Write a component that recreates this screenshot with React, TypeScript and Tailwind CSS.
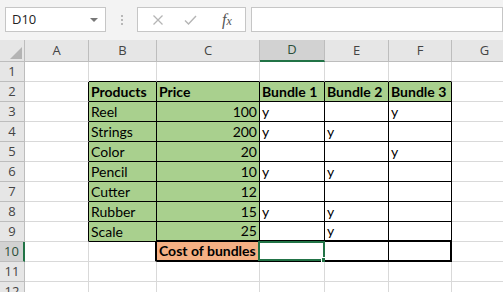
import React from 'react';

const colNames = ['A', 'B', 'C', 'D', 'E', 'F', 'G'];
const colWidths = ['w-[64px]', 'w-[68px]', 'w-[103px]', 'w-[65px]', 'w-[64px]', 'w-[63px]', 'w-[66px]'];

type Cell = { text?: string; bold?: boolean; right?: boolean };

const sheet: Record<string, Cell> = {
  B2: { text: 'Products', bold: true },
  C2: { text: 'Price', bold: true },
  D2: { text: 'Bundle 1', bold: true },
  E2: { text: 'Bundle 2', bold: true },
  F2: { text: 'Bundle 3', bold: true },
  B3: { text: 'Reel' }, C3: { text: '100', right: true }, D3: { text: 'y' }, F3: { text: 'y' },
  B4: { text: 'Strings' }, C4: { text: '200', right: true }, D4: { text: 'y' }, E4: { text: 'y' },
  B5: { text: 'Color' }, C5: { text: '20', right: true }, F5: { text: 'y' },
  B6: { text: 'Pencil' }, C6: { text: '10', right: true }, D6: { text: 'y' }, E6: { text: 'y' },
  B7: { text: 'Cutter' }, C7: { text: '12', right: true },
  B8: { text: 'Rubber' }, C8: { text: '15', right: true }, D8: { text: 'y' }, E8: { text: 'y' },
  B9: { text: 'Scale' }, C9: { text: '25', right: true }, E9: { text: 'y' },
  C10: { text: 'Cost of bundles', bold: true },
};

const inTable = (r: number, c: number) =>
  (r >= 2 && r <= 9 && c >= 1 && c <= 5) || (r === 10 && c >= 2 && c <= 5);

const isGreen = (r: number, c: number) =>
  (r === 2 && c >= 1 && c <= 5) || (r >= 3 && r <= 9 && (c === 1 || c === 2));

function SheetCell({ r, c }: { r: number; c: number }) {
  const key = colNames[c] + r;
  const cell = sheet[key];
  const thickRight = r === 10 && (c === 1 || c === 2 || c === 5);
  const thickBottom = (r === 9 || r === 10) && c >= 2 && c <= 5;
  const blackRight = inTable(r, c) || inTable(r, c + 1);
  const blackBottom = inTable(r, c) || inTable(r + 1, c);

  let bg = 'bg-white';
  if (isGreen(r, c)) bg = 'bg-[#a9d08e]';
  if (key === 'C10') bg = 'bg-[#f4b084]';

  return (
    <div
      className={[
        'relative flex h-full shrink-0 items-end overflow-visible text-[14px] leading-none text-black',
        colWidths[c],
        bg,
        thickRight ? 'border-r-2 border-r-black' : blackRight ? 'border-r border-r-black' : 'border-r border-r-[#d9d9d9]',
        thickBottom ? 'border-b-2 border-b-black' : blackBottom ? 'border-b border-b-black' : 'border-b border-b-[#d9d9d9]',
        cell?.right ? 'justify-end pr-[2px]' : 'pl-[2px]',
        cell?.bold ? 'font-bold' : '',
      ].join(' ')}
    >
      {cell?.text && <span className="whitespace-nowrap pb-[2px]">{cell.text}</span>}
      {key === 'D10' && (
        <div className="absolute -left-[2px] -top-[1px] -right-[1px] -bottom-[1px] border-2 border-[#217346]">
          <div className="absolute -right-[4px] -bottom-[4px] h-[6px] w-[6px] border border-white bg-[#217346]" />
        </div>
      )}
    </div>
  );
}

export default function App() {
  const rows = Array.from({ length: 12 }, (_, i) => i + 1);

  return (
    <div className="h-[292px] w-[503px] overflow-hidden bg-white font-['Lato',sans-serif]">
      {/* formula bar */}
      <div className="flex h-[40px] items-start bg-[#f3f3f3] pt-[7px] pl-[5px]">
        <div className="flex h-[25px] w-[101px] items-center justify-between border border-[#c6c6c6] bg-white pl-[6px] pr-[7px] font-['Open_Sans',sans-serif] text-[13px] text-[#222]">
          <span>D10</span>
          <span className="h-0 w-0 border-x-[4px] border-t-[4px] border-x-transparent border-t-[#777]" />
        </div>
        <div className="flex h-[25px] w-[31px] flex-col items-center justify-center gap-[2px]">
          <span className="h-[2px] w-[2px] bg-[#b8b8b8]" />
          <span className="h-[2px] w-[2px] bg-[#b8b8b8]" />
          <span className="h-[2px] w-[2px] bg-[#b8b8b8]" />
        </div>
        <div className="flex h-[25px] w-[109px] items-center border border-[#c6c6c6] bg-white">
          <svg className="ml-[14px]" width="12" height="12" viewBox="0 0 12 12">
            <path d="M1.5 1.5 L10.5 10.5 M10.5 1.5 L1.5 10.5" stroke="#b5b5b5" strokeWidth="1.3" fill="none" />
          </svg>
          <svg className="ml-[20px]" width="13" height="12" viewBox="0 0 13 12">
            <path d="M1 6.5 L4.5 10 L12 2" stroke="#b5b5b5" strokeWidth="1.4" fill="none" />
          </svg>
          <span className="ml-[25px] font-['Liberation_Serif',serif] text-[16px] italic text-[#555]">
            f<span className="text-[12px]">x</span>
          </span>
        </div>
        <div className="ml-[5px] h-[25px] flex-1 border border-[#c6c6c6] bg-white" />
      </div>

      {/* column headers */}
      <div className="flex h-[22px] bg-[#e6e6e6] font-['Open_Sans',sans-serif] text-[13px] text-[#444]">
        <div className="flex w-[25px] shrink-0 items-end justify-end border-r border-b border-[#bdbdbd] pr-[2px] pb-[2px]">
          <svg width="12" height="12" viewBox="0 0 12 12">
            <polygon points="12,0 12,12 0,12" fill="#b4b4b4" />
          </svg>
        </div>
        {colNames.map((n, c) => (
          <div
            key={n}
            className={[
              'flex shrink-0 items-center justify-center border-r',
              colWidths[c],
              n === 'D'
                ? 'border-b-2 border-b-[#217346] border-r-[#bdbdbd] bg-[#d2d2d2] text-[#2a4f39]'
                : 'border-b border-[#bdbdbd]',
            ].join(' ')}
          >
            {n}
          </div>
        ))}
      </div>

      {/* rows */}
      {rows.map(r => (
        <div key={r} className="flex h-[20px]">
          <div
            className={[
              'flex w-[25px] shrink-0 items-center justify-center border-b border-b-[#bdbdbd] font-[\'Open_Sans\',sans-serif] text-[13px]',
              r === 10
                ? 'border-r-2 border-r-[#217346] bg-[#d2d2d2] text-[#2a4f39]'
                : 'border-r border-r-[#bdbdbd] bg-[#e6e6e6] text-[#444]',
            ].join(' ')}
          >
            {r}
          </div>
          {colNames.map((_, c) => (
            <SheetCell key={c} r={r} c={c} />
          ))}
        </div>
      ))}
    </div>
  );
}
